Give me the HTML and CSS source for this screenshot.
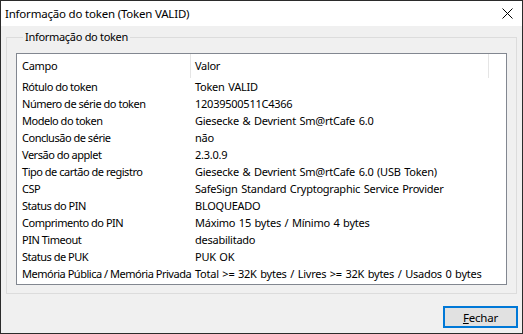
FILE: index.html
```html
<html>
    <head>
        <title>Informação do token</title>
        <meta charset="UTF-8">
        <link rel="stylesheet" href="styles.css">
    </head>
    <body>
        <div class="janela">
            <div class="titulo">
                <span>Informação do token (Token VALID)</span>
                <svg class="fechar-x" width="11" height="11" viewBox="0 0 11 11">
                    <path d="M0.5 0.5 L10.5 10.5 M10.5 0.5 L0.5 10.5" stroke="#000" stroke-width="1" fill="none"/>
                </svg>
            </div>
            <div class="conteudo">
                <fieldset class="grupo">
                    <legend>Informação do token</legend>
                    <div class="lista">
                        <div class="cabecalho">
                            <div class="col1">Campo</div>
                            <div class="col2">Valor</div>
                            <div></div>
                        </div>
                        <div class="linha"><div class="col1">Rótulo do token</div><div class="col2">Token VALID</div></div>
                        <div class="linha"><div class="col1">Número de série do token</div><div class="col2">12039500511C4366</div></div>
                        <div class="linha"><div class="col1">Modelo do token</div><div class="col2">Giesecke &amp; Devrient Sm@rtCafe 6.0</div></div>
                        <div class="linha"><div class="col1">Conclusão de série</div><div class="col2">não</div></div>
                        <div class="linha"><div class="col1">Versão do applet</div><div class="col2">2.3.0.9</div></div>
                        <div class="linha"><div class="col1">Tipo de cartão de registro</div><div class="col2">Giesecke &amp; Devrient Sm@rtCafe 6.0 (USB Token)</div></div>
                        <div class="linha"><div class="col1">CSP</div><div class="col2">SafeSign Standard Cryptographic Service Provider</div></div>
                        <div class="linha"><div class="col1">Status do PIN</div><div class="col2">BLOQUEADO</div></div>
                        <div class="linha"><div class="col1">Comprimento do PIN</div><div class="col2">Máximo 15 bytes / Mínimo 4 bytes</div></div>
                        <div class="linha"><div class="col1">PIN Timeout</div><div class="col2">desabilitado</div></div>
                        <div class="linha"><div class="col1">Status de PUK</div><div class="col2">PUK OK</div></div>
                        <div class="linha"><div class="col1">Memória Pública / Memória Privada</div><div class="col2">Total &gt;= 32K bytes / Livres &gt;= 32K bytes / Usados 0 bytes</div></div>
                    </div>
                </fieldset>
                <div class="botoes">
                    <button><u>F</u>echar</button>
                </div>
            </div>
        </div>
    </body>
</html>
```

FILE: styles.css
```css
body{
    margin: 0px;
    font-family: "Noto Sans", "Liberation Sans", sans-serif;
    font-size: 11px;
    letter-spacing: -0.3px;
    color: black;
}

.janela{
    width: 523px;
    height: 334px;
    box-sizing: border-box;
    border: 1px solid #2b2b2b;
    display: flex;
    flex-direction: column;
}

.titulo{
    height: 25px;
    background-color: white;
    display: flex;
    align-items: center;
    justify-content: space-between;
    padding-left: 4px;
    padding-right: 9px;
    padding-bottom: 1px;
    box-sizing: border-box;
    font-size: 11.5px;
    letter-spacing: -0.2px;
}

.fechar-x{
    display: block;
}

.conteudo{
    flex: 1;
    background-color: #f0f0f0;
    padding-top: 3px;
}

.grupo{
    margin: 0px 5px;
    padding: 0px 9px 8px 9px;
    border: 1px solid #dcdcdc;
    min-width: 0px;
}

.grupo legend{
    padding: 0px 2px;
    margin-left: 7px;
    line-height: 16px;
}

.lista{
    margin-top: 8px;
    background-color: white;
    border: 1px solid #828790;
    padding-bottom: 2px;
}

.cabecalho, .linha{
    display: grid;
    grid-template-columns: 174px 298px 1fr;
    white-space: nowrap;
}

.cabecalho{
    height: 24px;
    line-height: 23px;
}

.cabecalho .col1, .cabecalho .col2{
    border-right: 1px solid #e5e5e5;
}

.linha{
    height: 17px;
    line-height: 18px;
}

.col1{
    padding-left: 5px;
}

.linha .col1{
    letter-spacing: -0.48px;
}

.col2{
    padding-left: 4px;
}

.linha .col2{
    letter-spacing: -0.25px;
    word-spacing: 1px;
}

.botoes{
    display: flex;
    justify-content: flex-end;
    padding-top: 12px;
    padding-right: 4px;
}

button{
    width: 75px;
    height: 22px;
    font-family: inherit;
    font-size: 11.5px;
    letter-spacing: -0.2px;
    color: black;
    background-color: #e1e1e1;
    border: 2px solid #0078d7;
    padding: 0px;
}
```
